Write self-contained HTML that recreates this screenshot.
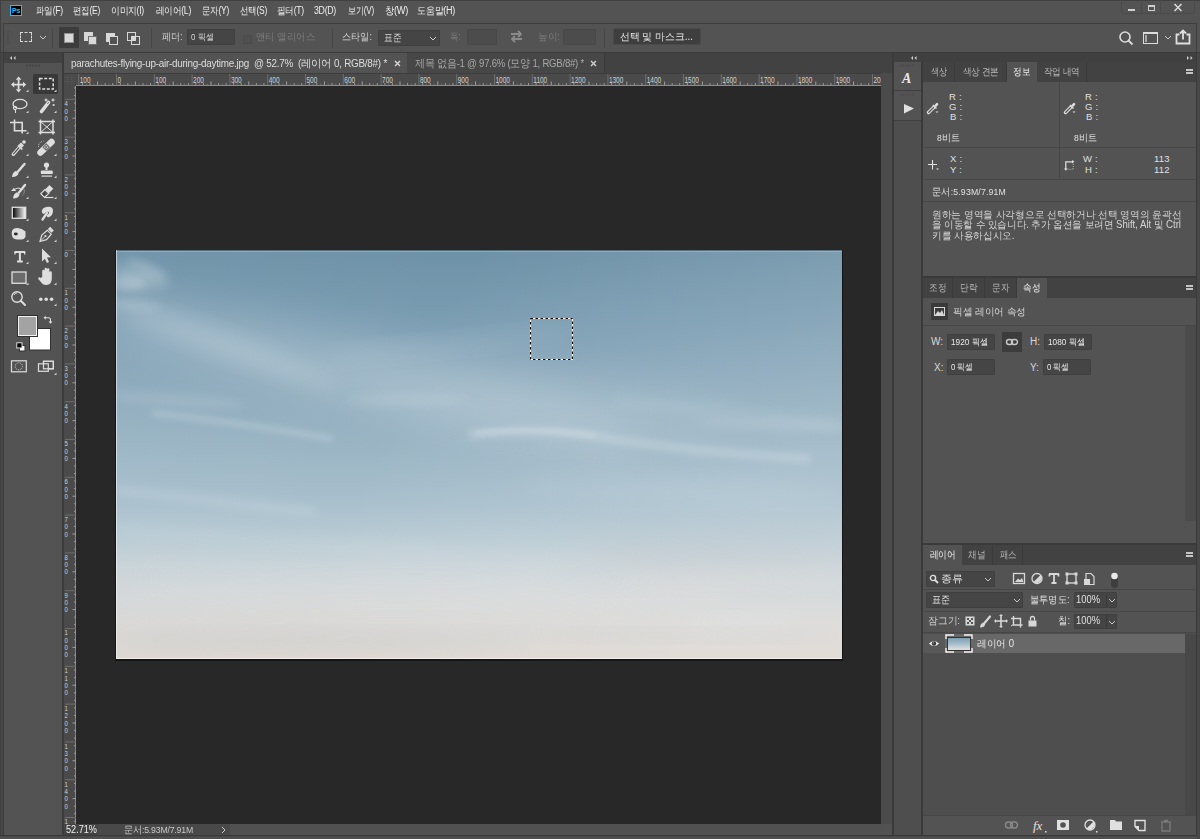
<!DOCTYPE html>
<html><head><meta charset="utf-8">
<style>
*{margin:0;padding:0;box-sizing:border-box}
html,body{width:1200px;height:839px;overflow:hidden;background:#535353;font-family:"Liberation Sans",sans-serif;color:#d6d6d6;font-size:10px}
.a{position:absolute}
.t{position:absolute;white-space:nowrap;line-height:1}
.menu .t{top:6px;color:#eeeeee;font-size:10px;letter-spacing:-0.3px}
svg text{font-family:"Liberation Sans",sans-serif;font-size:7px;fill:#d0d0d0}
.tabs{display:flex;height:20px}
.tab{height:20px;line-height:20px;text-align:center;font-size:10px;color:#b8b8b8;background:#424242;border-right:1px solid #3a3a3a;white-space:nowrap;letter-spacing:-0.2px}
.tab.on{background:#535353;color:#f0f0f0;border-right:none}
.info .t{font-size:9.5px;color:#e0e0e0;letter-spacing:0.2px}
.props .t{font-size:10px;color:#d8d8d8}
.fldt .t{font-size:9px;color:#e8e8e8}
.fl{font-size:10px;color:#e0e0e0}
.fitc{display:inline-block;white-space:nowrap}
.rl{font-size:8.3px}
.rv{font-size:7px}
.fld{background:#454545;border:1px solid #3f3f3f;border-radius:1px}
</style></head><body>
<!-- window border -->
<div class="a" style="left:0;top:0;width:1200px;height:839px;background:#535353"></div>

<!-- MENU BAR -->
<div class="a" style="left:0;top:0;width:1200px;height:1px;background:#404040"></div>
<div class="a" style="left:0;top:0;width:1px;height:839px;background:#404040"></div>
<div class="a" style="left:10px;top:5px;width:12px;height:11px;background:#000;border:1px solid #21c0f0"></div>
<svg class="a" style="left:10px;top:5px" width="12" height="11"><text x="6" y="8.3" text-anchor="middle" style="font-size:7px;font-weight:bold;fill:#21c0f0;letter-spacing:-0.3px">Ps</text></svg>
<div class="menu">
<span class="fit t" style="--w:27px;left:36px">파일(F)</span>
<span class="fit t" style="--w:27px;left:73px">편집(E)</span>
<span class="fit t" style="--w:33px;left:111px">이미지(I)</span>
<span class="fit t" style="--w:35px;left:156px">레이어(L)</span>
<span class="fit t" style="--w:27px;left:202px">문자(Y)</span>
<span class="fit t" style="--w:27px;left:240px">선택(S)</span>
<span class="fit t" style="--w:27px;left:277px">필터(T)</span>
<span class="fit t" style="--w:22px;left:314px">3D(D)</span>
<span class="fit t" style="--w:26px;left:348px">보기(V)</span>
<span class="fit t" style="--w:23px;left:385px">창(W)</span>
<span class="fit t" style="--w:38px;left:417px">도움말(H)</span>
</div>
<!-- window controls -->
<div class="a" style="left:1121px;top:-2px;width:74px;height:16px;border:1px solid #4a4a4a;border-radius:3px"></div>
<div class="a" style="left:1141px;top:0;width:1px;height:13px;background:#4a4a4a"></div>
<div class="a" style="left:1160px;top:0;width:1px;height:13px;background:#4a4a4a"></div>
<div class="a" style="left:1128px;top:9px;width:7px;height:2px;background:#d0d0d0"></div>
<div class="a" style="left:1148px;top:5px;width:7px;height:6px;border:1px solid #d0d0d0;border-top-width:2px"></div>
<svg class="a" style="left:1173px;top:3px" width="10" height="9"><path d="M1.5 1 L8.5 8 M8.5 1 L1.5 8" stroke="#d8d8d8" stroke-width="1.6"/></svg>

<!-- OPTIONS BAR -->
<div class="a" style="left:3px;top:23px;width:1194px;height:1px;background:#3e3e3e"></div>
<div class="a" style="left:3px;top:23px;width:1px;height:29px;background:#3e3e3e"></div>
<div class="a" style="left:1196px;top:23px;width:1px;height:29px;background:#3e3e3e"></div>
<div class="a" style="left:0;top:52px;width:1200px;height:1px;background:#3b3b3b"></div>
<div class="a" style="left:7px;top:31px;width:2px;height:14px;background:repeating-linear-gradient(#4a4a4a 0 1px,transparent 1px 2px)"></div>
<div class="a" style="left:20px;top:32px;width:12px;height:10px;border:1px dashed #d8d8d8"></div>
<svg class="a" style="left:39px;top:35px" width="8" height="5"><path d="M1 1 L4 4 L7 1" stroke="#c8c8c8" fill="none" stroke-width="1"/></svg>
<div class="a" style="left:52px;top:28px;width:1px;height:20px;background:#474747"></div>
<div class="a" style="left:59px;top:27px;width:20px;height:21px;background:#3c3c3c;border-radius:1px"></div>
<div class="a" style="left:64px;top:33px;width:10px;height:10px;background:#d8d8d8;border:1px solid #909090"></div>
<div class="a" style="left:84px;top:32px;width:9px;height:9px;background:#d8d8d8"></div>
<div class="a" style="left:88px;top:36px;width:9px;height:9px;background:#d8d8d8;border:1px solid #707070"></div>
<div class="a" style="left:106px;top:33px;width:9px;height:9px;background:#d8d8d8"></div>
<div class="a" style="left:109px;top:36px;width:9px;height:9px;background:#535353;border:1px solid #d8d8d8"></div>
<div class="a" style="left:127px;top:32px;width:9px;height:9px;border:1px solid #d8d8d8"></div>
<div class="a" style="left:131px;top:36px;width:9px;height:9px;border:1px solid #d8d8d8"></div>
<div class="a" style="left:131px;top:36px;width:5px;height:5px;background:#d8d8d8"></div>
<div class="a" style="left:151px;top:28px;width:1px;height:20px;background:#474747"></div>
<span class="fit t" style="--w:20.5px;left:162px;top:32px">페더:</span>
<div class="a fld" style="left:187px;top:29px;width:48px;height:16px"></div>
<span class="fit t" style="--w:22.5px;left:191px;top:32.5px;font-size:9px">0 픽셀</span>
<div class="a" style="left:243px;top:35px;width:9px;height:9px;border:1px solid #4a4a4a;background:#505050"></div>
<span class="fit t" style="--w:59px;left:256px;top:32px;color:#7c7c7c">앤티 앨리어스</span>
<div class="a" style="left:332px;top:28px;width:1px;height:20px;background:#474747"></div>
<span class="fit t" style="--w:30px;left:342px;top:32px">스타일:</span>
<div class="a fld" style="left:378px;top:30px;width:62px;height:16px"></div>
<span class="fit t" style="--w:17.5px;left:384px;top:33px">표준</span>
<svg class="a" style="left:429px;top:36px" width="8" height="5"><path d="M1 1 L4 4 L7 1" stroke="#c8c8c8" fill="none" stroke-width="1"/></svg>
<span class="fit t" style="--w:11px;left:450px;top:32px;color:#7c7c7c">폭:</span>
<div class="a" style="left:467px;top:29px;width:30px;height:16px;background:#4c4c4c;border:1px solid #484848"></div>
<svg class="a" style="left:509px;top:30px" width="15" height="13"><path d="M2 4 H12 M9 1 L12 4 L9 7 M13 9 H3 M6 6 L3 9 L6 12" stroke="#8a8a8a" fill="none" stroke-width="1.8"/></svg>
<span class="fit t" style="--w:22px;left:538px;top:32px;color:#7c7c7c">높이:</span>
<div class="a" style="left:563px;top:29px;width:33px;height:16px;background:#4c4c4c;border:1px solid #484848"></div>
<div class="a" style="left:604px;top:28px;width:1px;height:20px;background:#474747"></div>
<div class="a" style="left:613px;top:28px;width:88px;height:17px;background:#3e3e3e;border:1px solid #4a4a4a;border-radius:2px"></div>
<span class="fit t" style="--w:73px;left:620px;top:32px;color:#e8e8e8">선택 및 마스크...</span>
<svg class="a" style="left:1118px;top:30px" width="16" height="16"><circle cx="7" cy="7" r="5" stroke="#dcdcdc" stroke-width="1.6" fill="none"/><path d="M10.5 10.5 L14.5 14.5" stroke="#dcdcdc" stroke-width="1.8"/></svg>
<div class="a" style="left:1143px;top:32px;width:15px;height:12px;border:1px solid #dcdcdc;border-top-width:2px"></div>
<div class="a" style="left:1145px;top:35px;width:2px;height:7px;background:#aaa"></div>
<svg class="a" style="left:1164px;top:35px" width="8" height="5"><path d="M1 1 L4 4 L7 1" stroke="#c8c8c8" fill="none" stroke-width="1"/></svg>
<svg class="a" style="left:1175px;top:29px" width="16" height="16"><path d="M4.5 5.5 H1.5 V14.5 H14.5 V5.5 H11.5" stroke="#e0e0e0" stroke-width="1.8" fill="none"/><path d="M8 10.5 V2 M5 4.5 L8 1.5 L11 4.5" stroke="#e0e0e0" stroke-width="1.8" fill="none"/></svg>

<!-- LEFT TOOLS PANEL -->
<div class="a" style="left:1px;top:53px;width:3px;height:782px;background:#474747"></div>
<div class="a" style="left:3px;top:53px;width:1px;height:782px;background:#3b3b3b"></div>
<div class="a" style="left:4px;top:53px;width:58px;height:10px;background:#424242"></div>
<svg class="a" style="left:9px;top:55px" width="8" height="6"><path d="M3 1 L1 3 L3 5z M6.5 1 L4.5 3 L6.5 5z" fill="#d0d0d0"/></svg>
<div class="a" style="left:4px;top:63px;width:58px;height:772px;background:#535353"></div>
<div class="a" style="left:62px;top:53px;width:2px;height:782px;background:#3b3b3b"></div>
<svg class="a" style="left:0;top:0" width="64" height="380"><path d="M26 65.5 H40" stroke="#474747" stroke-width="2" stroke-dasharray="2 1"/><rect x="33" y="74" width="25" height="20" rx="1.5" fill="#383838"/><g fill="#dedede"><path d="M17.7 79.5 h1.8 v10 h-1.8z M13 83.7 h11 v1.8 h-11z"/><path d="M18.6 76.5 l-2.8 3.2 h5.6z M18.6 92.5 l-2.8 -3.2 h5.6z M11 84.6 l3.2 -2.8 v5.6z M26.2 84.6 l-3.2 -2.8 v5.6z"/></g><path d="M28.5 92 h-2.5 l2.5 -2.5z" fill="#cfcfcf"/><rect x="39.6" y="78.4" width="13.6" height="10.6" fill="none" stroke="#dedede" stroke-width="1.5" stroke-dasharray="3 1.6"/><path d="M56.5 92 h-2.5 l2.5 -2.5z" fill="#cfcfcf"/><ellipse cx="20" cy="104" rx="7" ry="4.6" fill="none" stroke="#dedede" stroke-width="1.3"/><circle cx="15" cy="108" r="1.6" fill="none" stroke="#dedede" stroke-width="1.1"/><path d="M15.5 109.5 V113" stroke="#dedede" stroke-width="1.1"/><path d="M28.5 113 h-2.5 l2.5 -2.5z" fill="#cfcfcf"/><path d="M41.5 111.5 L48.5 102.5" stroke="#dedede" stroke-width="3.6" stroke-linecap="round"/><path d="M47.5 103.8 L48.6 102.4" stroke="#535353" stroke-width="1"/><path d="M46 98 l0.8 1.6 1.6 0.4 -1.6 0.5 -0.8 1.6 -0.8 -1.6 -1.6 -0.5 1.6 -0.4z M53 98 l0.8 1.6 1.6 0.4 -1.6 0.5 -0.8 1.6 -0.8 -1.6 -1.6 -0.5 1.6 -0.4z" fill="#dedede"/><circle cx="53.6" cy="105" r="1.1" fill="#dedede"/><path d="M56.5 113 h-2.5 l2.5 -2.5z" fill="#cfcfcf"/><path d="M10 122.5 H22.2 V133.5 M14.5 119.5 V130.8 H26.5" fill="none" stroke="#dedede" stroke-width="1.6"/><path d="M28.5 134 h-2.5 l2.5 -2.5z" fill="#cfcfcf"/><path d="M38.5 121.5 H55 M38.5 132.5 H55 M40.5 119.5 V134.5 M53 119.5 V134.5" stroke="#dedede" stroke-width="1.5"/><path d="M40.5 121.5 L53 132.5 M53 121.5 L40.5 132.5" stroke="#dedede" stroke-width="1"/><path d="M13.3 154.3 L20.5 146" stroke="#dedede" stroke-width="3.4" stroke-linecap="round"/><path d="M13.6 153.8 L20 146.5" stroke="#535353" stroke-width="1.2" stroke-linecap="round"/><path d="M18.5 144.5 l4.5 4.5 l-1.5 1 l-4 -4z" fill="#dedede"/><path d="M21 142.5 l3 3 l-2 2 l-3 -3z" fill="#dedede"/><circle cx="24" cy="142" r="1.8" fill="#dedede"/><path d="M28.5 156 h-2.5 l2.5 -2.5z" fill="#cfcfcf"/><path d="M40.5 152.5 L51.5 142" stroke="#dedede" stroke-width="6.5" stroke-linecap="round"/><rect x="43.5" y="144.5" width="5.5" height="5.5" transform="rotate(-45 46.2 147.2)" fill="#6a6a6a"/><circle cx="46.2" cy="145.8" r="0.7" fill="#dedede"/><circle cx="46.2" cy="148.6" r="0.7" fill="#dedede"/><circle cx="44.8" cy="147.2" r="0.7" fill="#dedede"/><circle cx="47.6" cy="147.2" r="0.7" fill="#dedede"/><path d="M38.5 147 q0 -5 5 -6" fill="none" stroke="#dedede" stroke-width="0.9" stroke-dasharray="1 1"/><path d="M56.5 156 h-2.5 l2.5 -2.5z" fill="#cfcfcf"/><path d="M18 171.5 L24.5 164" stroke="#dedede" stroke-width="2.4" stroke-linecap="round"/><path d="M12 177 q0.5 -5 4 -6.3 l2.6 2.2 q-1 4.2 -6.6 4.1z" fill="#dedede"/><path d="M28.5 178 h-2.5 l2.5 -2.5z" fill="#cfcfcf"/><circle cx="46.5" cy="165" r="2.6" fill="#dedede"/><rect x="45.5" y="166" width="2" height="4" fill="#dedede"/><rect x="40.8" y="170.5" width="12" height="3.6" rx="1.2" fill="#dedede"/><rect x="41.5" y="175.5" width="10.5" height="1.2" fill="#dedede"/><path d="M56.5 178 h-2.5 l2.5 -2.5z" fill="#cfcfcf"/><path d="M19 192.5 L25 185" stroke="#dedede" stroke-width="2.4" stroke-linecap="round"/><path d="M13 198.5 q0.5 -5 4 -6.3 l2.6 2.2 q-1 4.2 -6.6 4.1z" fill="#dedede"/><path d="M11 191 l3 -3.3 l2 3.3z" fill="#dedede"/><path d="M14.5 189.3 q4 -2.3 6.5 -0.5" fill="none" stroke="#dedede" stroke-width="1"/><path d="M24 189.5 q1 3 -1.5 6" fill="none" stroke="#dedede" stroke-width="0.8" stroke-dasharray="1 1"/><path d="M28.5 199 h-2.5 l2.5 -2.5z" fill="#cfcfcf"/><path d="M45 189.5 L49.5 185 L53.3 188.8 L48.8 193.3z" fill="#dedede"/><path d="M45 189.5 L40.8 193.7 L44.6 197.5 L48.8 193.3z" fill="none" stroke="#dedede" stroke-width="1.2"/><path d="M44.6 197.5 H53.5" stroke="#dedede" stroke-width="1.2"/><circle cx="44" cy="194" r="1.2" fill="#3a3a3a"/><path d="M56.5 199 h-2.5 l2.5 -2.5z" fill="#cfcfcf"/><defs><linearGradient id="g1"><stop offset="0" stop-color="#000"/><stop offset="1" stop-color="#fff"/></linearGradient></defs><rect x="12.3" y="207.3" width="13.4" height="11" fill="url(#g1)" stroke="#dedede" stroke-width="1.3"/><path d="M28.5 221 h-2.5 l2.5 -2.5z" fill="#cfcfcf"/><path d="M42.5 219.5 L47 213" stroke="#dedede" stroke-width="2.2" stroke-linecap="round"/><path d="M42 213 q-1 -5 4.5 -6 q6.5 -1 6.5 4 q0 5 -5 6.5 l-2 -2 q3 -1 3 -3.5 q-2.5 -1 -5 2z" fill="#dedede"/><path d="M56.5 221 h-2.5 l2.5 -2.5z" fill="#cfcfcf"/><path d="M11.7 233 q0 -5 6 -5 q4 0 7.8 3.5 v5.5 q-1.5 2.5 -4 2.5 h-4.5 q-5.3 0 -5.3 -6.5z" fill="#dedede"/><ellipse cx="15.8" cy="234" rx="2" ry="1.4" fill="#2e2e2e"/><path d="M28.5 242 h-2.5 l2.5 -2.5z" fill="#cfcfcf"/><path d="M40 241.5 l1.8 -6.5 l5.5 -4.8 l4 4 l-4.8 5.5z" fill="none" stroke="#dedede" stroke-width="1.2"/><path d="M47.8 229 l2.4 -2.2 l3.6 3.6 l-2.2 2.4z" fill="#dedede"/><path d="M40.5 241 L45 236.5" stroke="#dedede" stroke-width="0.9"/><circle cx="45.5" cy="236" r="1.1" fill="#dedede"/><path d="M56.5 242 h-2.5 l2.5 -2.5z" fill="#cfcfcf"/><path d="M14.5 252 H25.2 M19.9 252 V261.5 M17 261.5 H22.8" stroke="#dedede" stroke-width="2" fill="none"/><path d="M15 252 v2.5 M24.7 252 v2.5" stroke="#dedede" stroke-width="1.3"/><path d="M28.5 264 h-2.5 l2.5 -2.5z" fill="#cfcfcf"/><path d="M42 248.5 V261.5 L44.8 258.7 L47 263 L49 262 L47 257.5 L51 257.3z" fill="#dedede"/><path d="M56.5 264 h-2.5 l2.5 -2.5z" fill="#cfcfcf"/><rect x="12" y="272" width="14" height="11.3" fill="#6c6c6c" stroke="#dedede" stroke-width="1.3"/><path d="M28.5 285 h-2.5 l2.5 -2.5z" fill="#cfcfcf"/><path d="M42.2 277 v-6 q0 -1.2 1.2 -1.2 q1.2 0 1.2 1.2 v4.5 v-6.5 q0 -1.2 1.2 -1.2 q1.2 0 1.2 1.2 v6 v-5.5 q0 -1.2 1.2 -1.2 q1.2 0 1.2 1.2 v6.5 v-3.5 q0 -1.2 1.2 -1.2 q1.2 0 1.2 1.2 v6 q0 6 -5.5 6.5 q-3.5 0 -5 -2.5 l-3 -3.5 q-0.5 -1 0.5 -1.5 q1 -0.5 1.8 0.5z" fill="#dedede"/><path d="M56.5 285 h-2.5 l2.5 -2.5z" fill="#cfcfcf"/><circle cx="17" cy="297" r="5.2" fill="none" stroke="#dedede" stroke-width="1.4"/><path d="M14 295 q1 -2 3 -2" fill="none" stroke="#dedede" stroke-width="0.9"/><path d="M20.8 300.8 L25 305" stroke="#dedede" stroke-width="2" stroke-linecap="round"/><circle cx="40.8" cy="299.2" r="1.8" fill="#dedede"/><circle cx="46.2" cy="299.2" r="1.8" fill="#dedede"/><circle cx="51.6" cy="299.2" r="1.8" fill="#dedede"/><path d="M56.5 306 h-2.5 l2.5 -2.5z" fill="#cfcfcf"/><rect x="29.5" y="328.5" width="21" height="21.5" fill="#fff" stroke="#303030"/><rect x="17.5" y="315.5" width="20" height="21" fill="#f2f2f2" stroke="#303030"/><rect x="19" y="317" width="17" height="18" fill="#a3a3a3"/><path d="M45 317.8 h3.5 q2 0 2 2 v2.5" fill="none" stroke="#dedede" stroke-width="1.1"/><path d="M43.5 317.8 l2.2 -2 v4z M50.5 323.8 l-2 -2.2 h4z" fill="#dedede"/><rect x="19.5" y="345.5" width="5.5" height="5.5" fill="#fff" stroke="#303030"/><rect x="16.8" y="342.8" width="5.2" height="5.2" fill="#000" stroke="#f0f0f0" stroke-width="0.9"/><rect x="11.5" y="360.8" width="14.8" height="11" fill="none" stroke="#dedede" stroke-width="1.2"/><circle cx="18.8" cy="366.3" r="3.6" fill="none" stroke="#dedede" stroke-width="0.9" stroke-dasharray="0.9 0.9"/><rect x="43.5" y="361.3" width="9.8" height="7.5" fill="#535353" stroke="#dedede" stroke-width="1.2"/><rect x="38.5" y="363.8" width="9.8" height="7.5" fill="#535353" stroke="#dedede" stroke-width="1.2"/><rect x="43.5" y="361.3" width="9.8" height="7.5" fill="none" stroke="#dedede" stroke-width="1.2"/><path d="M56.5 375 h-2.5 l2.5 -2.5z" fill="#cfcfcf"/></svg>

<!-- DOC AREA -->
<div class="a" style="left:64px;top:53px;width:829px;height:20px;background:#424242"></div>
<div class="a" style="left:64px;top:53px;width:343px;height:20px;background:#535353"></div>
<div class="a" style="left:407px;top:53px;width:197px;height:20px;background:#474747"></div>
<div class="a" style="left:604px;top:53px;width:1px;height:20px;background:#3a3a3a"></div>
<div class="fit t" style="--w:316px;left:71px;top:58px;font-size:10.5px;color:#dedede;letter-spacing:-0.25px">parachutes-flying-up-air-during-daytime.jpg&nbsp; @ 52.7%&nbsp; (레이어 0, RGB/8#) *</div>
<svg class="a" style="left:394px;top:60px" width="7" height="7"><path d="M1 1 L6 6 M6 1 L1 6" stroke="#d8d8d8" stroke-width="1.4"/></svg>
<div class="fit t" style="--w:169px;left:415px;top:58px;font-size:10.5px;color:#a8a8a8;letter-spacing:-0.25px">제목 없음-1 @ 97.6% (모양 1, RGB/8#) *</div>
<svg class="a" style="left:590px;top:60px" width="7" height="7"><path d="M1 1 L6 6 M6 1 L1 6" stroke="#d0d0d0" stroke-width="1.4"/></svg>
<div class="a" style="left:64px;top:73px;width:12px;height:13px;background:#4a4a4a"></div>
<svg class="a" style="left:64px;top:73px" width="817" height="13"><rect width="817" height="13" fill="#4a4a4a"/><rect x="0" y="12" width="817" height="1" fill="#8c8c8c"/><rect x="17.98" y="10" width="1" height="2" fill="#9a9a9a"/><rect x="21.76" y="10.5" width="1" height="1.5" fill="#6e6e6e"/><rect x="25.54" y="10" width="1" height="2" fill="#9a9a9a"/><rect x="29.32" y="10.5" width="1" height="1.5" fill="#6e6e6e"/><rect x="33.10" y="8.5" width="1" height="3.5" fill="#a0a0a0"/><rect x="36.88" y="10.5" width="1" height="1.5" fill="#6e6e6e"/><rect x="40.66" y="10" width="1" height="2" fill="#9a9a9a"/><rect x="44.44" y="10.5" width="1" height="1.5" fill="#6e6e6e"/><rect x="48.22" y="10" width="1" height="2" fill="#9a9a9a"/><rect x="55.78" y="10" width="1" height="2" fill="#9a9a9a"/><rect x="59.56" y="10.5" width="1" height="1.5" fill="#6e6e6e"/><rect x="63.34" y="10" width="1" height="2" fill="#9a9a9a"/><rect x="67.12" y="10.5" width="1" height="1.5" fill="#6e6e6e"/><rect x="70.90" y="8.5" width="1" height="3.5" fill="#a0a0a0"/><rect x="74.68" y="10.5" width="1" height="1.5" fill="#6e6e6e"/><rect x="78.46" y="10" width="1" height="2" fill="#9a9a9a"/><rect x="82.24" y="10.5" width="1" height="1.5" fill="#6e6e6e"/><rect x="86.02" y="10" width="1" height="2" fill="#9a9a9a"/><rect x="93.58" y="10" width="1" height="2" fill="#9a9a9a"/><rect x="97.36" y="10.5" width="1" height="1.5" fill="#6e6e6e"/><rect x="101.14" y="10" width="1" height="2" fill="#9a9a9a"/><rect x="104.92" y="10.5" width="1" height="1.5" fill="#6e6e6e"/><rect x="108.70" y="8.5" width="1" height="3.5" fill="#a0a0a0"/><rect x="112.48" y="10.5" width="1" height="1.5" fill="#6e6e6e"/><rect x="116.26" y="10" width="1" height="2" fill="#9a9a9a"/><rect x="120.04" y="10.5" width="1" height="1.5" fill="#6e6e6e"/><rect x="123.82" y="10" width="1" height="2" fill="#9a9a9a"/><rect x="131.38" y="10" width="1" height="2" fill="#9a9a9a"/><rect x="135.16" y="10.5" width="1" height="1.5" fill="#6e6e6e"/><rect x="138.94" y="10" width="1" height="2" fill="#9a9a9a"/><rect x="142.72" y="10.5" width="1" height="1.5" fill="#6e6e6e"/><rect x="146.50" y="8.5" width="1" height="3.5" fill="#a0a0a0"/><rect x="150.28" y="10.5" width="1" height="1.5" fill="#6e6e6e"/><rect x="154.06" y="10" width="1" height="2" fill="#9a9a9a"/><rect x="157.84" y="10.5" width="1" height="1.5" fill="#6e6e6e"/><rect x="161.62" y="10" width="1" height="2" fill="#9a9a9a"/><rect x="169.18" y="10" width="1" height="2" fill="#9a9a9a"/><rect x="172.96" y="10.5" width="1" height="1.5" fill="#6e6e6e"/><rect x="176.74" y="10" width="1" height="2" fill="#9a9a9a"/><rect x="180.52" y="10.5" width="1" height="1.5" fill="#6e6e6e"/><rect x="184.30" y="8.5" width="1" height="3.5" fill="#a0a0a0"/><rect x="188.08" y="10.5" width="1" height="1.5" fill="#6e6e6e"/><rect x="191.86" y="10" width="1" height="2" fill="#9a9a9a"/><rect x="195.64" y="10.5" width="1" height="1.5" fill="#6e6e6e"/><rect x="199.42" y="10" width="1" height="2" fill="#9a9a9a"/><rect x="206.98" y="10" width="1" height="2" fill="#9a9a9a"/><rect x="210.76" y="10.5" width="1" height="1.5" fill="#6e6e6e"/><rect x="214.54" y="10" width="1" height="2" fill="#9a9a9a"/><rect x="218.32" y="10.5" width="1" height="1.5" fill="#6e6e6e"/><rect x="222.10" y="8.5" width="1" height="3.5" fill="#a0a0a0"/><rect x="225.88" y="10.5" width="1" height="1.5" fill="#6e6e6e"/><rect x="229.66" y="10" width="1" height="2" fill="#9a9a9a"/><rect x="233.44" y="10.5" width="1" height="1.5" fill="#6e6e6e"/><rect x="237.22" y="10" width="1" height="2" fill="#9a9a9a"/><rect x="244.78" y="10" width="1" height="2" fill="#9a9a9a"/><rect x="248.56" y="10.5" width="1" height="1.5" fill="#6e6e6e"/><rect x="252.34" y="10" width="1" height="2" fill="#9a9a9a"/><rect x="256.12" y="10.5" width="1" height="1.5" fill="#6e6e6e"/><rect x="259.90" y="8.5" width="1" height="3.5" fill="#a0a0a0"/><rect x="263.68" y="10.5" width="1" height="1.5" fill="#6e6e6e"/><rect x="267.46" y="10" width="1" height="2" fill="#9a9a9a"/><rect x="271.24" y="10.5" width="1" height="1.5" fill="#6e6e6e"/><rect x="275.02" y="10" width="1" height="2" fill="#9a9a9a"/><rect x="282.58" y="10" width="1" height="2" fill="#9a9a9a"/><rect x="286.36" y="10.5" width="1" height="1.5" fill="#6e6e6e"/><rect x="290.14" y="10" width="1" height="2" fill="#9a9a9a"/><rect x="293.92" y="10.5" width="1" height="1.5" fill="#6e6e6e"/><rect x="297.70" y="8.5" width="1" height="3.5" fill="#a0a0a0"/><rect x="301.48" y="10.5" width="1" height="1.5" fill="#6e6e6e"/><rect x="305.26" y="10" width="1" height="2" fill="#9a9a9a"/><rect x="309.04" y="10.5" width="1" height="1.5" fill="#6e6e6e"/><rect x="312.82" y="10" width="1" height="2" fill="#9a9a9a"/><rect x="320.38" y="10" width="1" height="2" fill="#9a9a9a"/><rect x="324.16" y="10.5" width="1" height="1.5" fill="#6e6e6e"/><rect x="327.94" y="10" width="1" height="2" fill="#9a9a9a"/><rect x="331.72" y="10.5" width="1" height="1.5" fill="#6e6e6e"/><rect x="335.50" y="8.5" width="1" height="3.5" fill="#a0a0a0"/><rect x="339.28" y="10.5" width="1" height="1.5" fill="#6e6e6e"/><rect x="343.06" y="10" width="1" height="2" fill="#9a9a9a"/><rect x="346.84" y="10.5" width="1" height="1.5" fill="#6e6e6e"/><rect x="350.62" y="10" width="1" height="2" fill="#9a9a9a"/><rect x="358.18" y="10" width="1" height="2" fill="#9a9a9a"/><rect x="361.96" y="10.5" width="1" height="1.5" fill="#6e6e6e"/><rect x="365.74" y="10" width="1" height="2" fill="#9a9a9a"/><rect x="369.52" y="10.5" width="1" height="1.5" fill="#6e6e6e"/><rect x="373.30" y="8.5" width="1" height="3.5" fill="#a0a0a0"/><rect x="377.08" y="10.5" width="1" height="1.5" fill="#6e6e6e"/><rect x="380.86" y="10" width="1" height="2" fill="#9a9a9a"/><rect x="384.64" y="10.5" width="1" height="1.5" fill="#6e6e6e"/><rect x="388.42" y="10" width="1" height="2" fill="#9a9a9a"/><rect x="395.98" y="10" width="1" height="2" fill="#9a9a9a"/><rect x="399.76" y="10.5" width="1" height="1.5" fill="#6e6e6e"/><rect x="403.54" y="10" width="1" height="2" fill="#9a9a9a"/><rect x="407.32" y="10.5" width="1" height="1.5" fill="#6e6e6e"/><rect x="411.10" y="8.5" width="1" height="3.5" fill="#a0a0a0"/><rect x="414.88" y="10.5" width="1" height="1.5" fill="#6e6e6e"/><rect x="418.66" y="10" width="1" height="2" fill="#9a9a9a"/><rect x="422.44" y="10.5" width="1" height="1.5" fill="#6e6e6e"/><rect x="426.22" y="10" width="1" height="2" fill="#9a9a9a"/><rect x="433.78" y="10" width="1" height="2" fill="#9a9a9a"/><rect x="437.56" y="10.5" width="1" height="1.5" fill="#6e6e6e"/><rect x="441.34" y="10" width="1" height="2" fill="#9a9a9a"/><rect x="445.12" y="10.5" width="1" height="1.5" fill="#6e6e6e"/><rect x="448.90" y="8.5" width="1" height="3.5" fill="#a0a0a0"/><rect x="452.68" y="10.5" width="1" height="1.5" fill="#6e6e6e"/><rect x="456.46" y="10" width="1" height="2" fill="#9a9a9a"/><rect x="460.24" y="10.5" width="1" height="1.5" fill="#6e6e6e"/><rect x="464.02" y="10" width="1" height="2" fill="#9a9a9a"/><rect x="471.58" y="10" width="1" height="2" fill="#9a9a9a"/><rect x="475.36" y="10.5" width="1" height="1.5" fill="#6e6e6e"/><rect x="479.14" y="10" width="1" height="2" fill="#9a9a9a"/><rect x="482.92" y="10.5" width="1" height="1.5" fill="#6e6e6e"/><rect x="486.70" y="8.5" width="1" height="3.5" fill="#a0a0a0"/><rect x="490.48" y="10.5" width="1" height="1.5" fill="#6e6e6e"/><rect x="494.26" y="10" width="1" height="2" fill="#9a9a9a"/><rect x="498.04" y="10.5" width="1" height="1.5" fill="#6e6e6e"/><rect x="501.82" y="10" width="1" height="2" fill="#9a9a9a"/><rect x="509.38" y="10" width="1" height="2" fill="#9a9a9a"/><rect x="513.16" y="10.5" width="1" height="1.5" fill="#6e6e6e"/><rect x="516.94" y="10" width="1" height="2" fill="#9a9a9a"/><rect x="520.72" y="10.5" width="1" height="1.5" fill="#6e6e6e"/><rect x="524.50" y="8.5" width="1" height="3.5" fill="#a0a0a0"/><rect x="528.28" y="10.5" width="1" height="1.5" fill="#6e6e6e"/><rect x="532.06" y="10" width="1" height="2" fill="#9a9a9a"/><rect x="535.84" y="10.5" width="1" height="1.5" fill="#6e6e6e"/><rect x="539.62" y="10" width="1" height="2" fill="#9a9a9a"/><rect x="547.18" y="10" width="1" height="2" fill="#9a9a9a"/><rect x="550.96" y="10.5" width="1" height="1.5" fill="#6e6e6e"/><rect x="554.74" y="10" width="1" height="2" fill="#9a9a9a"/><rect x="558.52" y="10.5" width="1" height="1.5" fill="#6e6e6e"/><rect x="562.30" y="8.5" width="1" height="3.5" fill="#a0a0a0"/><rect x="566.08" y="10.5" width="1" height="1.5" fill="#6e6e6e"/><rect x="569.86" y="10" width="1" height="2" fill="#9a9a9a"/><rect x="573.64" y="10.5" width="1" height="1.5" fill="#6e6e6e"/><rect x="577.42" y="10" width="1" height="2" fill="#9a9a9a"/><rect x="584.98" y="10" width="1" height="2" fill="#9a9a9a"/><rect x="588.76" y="10.5" width="1" height="1.5" fill="#6e6e6e"/><rect x="592.54" y="10" width="1" height="2" fill="#9a9a9a"/><rect x="596.32" y="10.5" width="1" height="1.5" fill="#6e6e6e"/><rect x="600.10" y="8.5" width="1" height="3.5" fill="#a0a0a0"/><rect x="603.88" y="10.5" width="1" height="1.5" fill="#6e6e6e"/><rect x="607.66" y="10" width="1" height="2" fill="#9a9a9a"/><rect x="611.44" y="10.5" width="1" height="1.5" fill="#6e6e6e"/><rect x="615.22" y="10" width="1" height="2" fill="#9a9a9a"/><rect x="622.78" y="10" width="1" height="2" fill="#9a9a9a"/><rect x="626.56" y="10.5" width="1" height="1.5" fill="#6e6e6e"/><rect x="630.34" y="10" width="1" height="2" fill="#9a9a9a"/><rect x="634.12" y="10.5" width="1" height="1.5" fill="#6e6e6e"/><rect x="637.90" y="8.5" width="1" height="3.5" fill="#a0a0a0"/><rect x="641.68" y="10.5" width="1" height="1.5" fill="#6e6e6e"/><rect x="645.46" y="10" width="1" height="2" fill="#9a9a9a"/><rect x="649.24" y="10.5" width="1" height="1.5" fill="#6e6e6e"/><rect x="653.02" y="10" width="1" height="2" fill="#9a9a9a"/><rect x="660.58" y="10" width="1" height="2" fill="#9a9a9a"/><rect x="664.36" y="10.5" width="1" height="1.5" fill="#6e6e6e"/><rect x="668.14" y="10" width="1" height="2" fill="#9a9a9a"/><rect x="671.92" y="10.5" width="1" height="1.5" fill="#6e6e6e"/><rect x="675.70" y="8.5" width="1" height="3.5" fill="#a0a0a0"/><rect x="679.48" y="10.5" width="1" height="1.5" fill="#6e6e6e"/><rect x="683.26" y="10" width="1" height="2" fill="#9a9a9a"/><rect x="687.04" y="10.5" width="1" height="1.5" fill="#6e6e6e"/><rect x="690.82" y="10" width="1" height="2" fill="#9a9a9a"/><rect x="698.38" y="10" width="1" height="2" fill="#9a9a9a"/><rect x="702.16" y="10.5" width="1" height="1.5" fill="#6e6e6e"/><rect x="705.94" y="10" width="1" height="2" fill="#9a9a9a"/><rect x="709.72" y="10.5" width="1" height="1.5" fill="#6e6e6e"/><rect x="713.50" y="8.5" width="1" height="3.5" fill="#a0a0a0"/><rect x="717.28" y="10.5" width="1" height="1.5" fill="#6e6e6e"/><rect x="721.06" y="10" width="1" height="2" fill="#9a9a9a"/><rect x="724.84" y="10.5" width="1" height="1.5" fill="#6e6e6e"/><rect x="728.62" y="10" width="1" height="2" fill="#9a9a9a"/><rect x="736.18" y="10" width="1" height="2" fill="#9a9a9a"/><rect x="739.96" y="10.5" width="1" height="1.5" fill="#6e6e6e"/><rect x="743.74" y="10" width="1" height="2" fill="#9a9a9a"/><rect x="747.52" y="10.5" width="1" height="1.5" fill="#6e6e6e"/><rect x="751.30" y="8.5" width="1" height="3.5" fill="#a0a0a0"/><rect x="755.08" y="10.5" width="1" height="1.5" fill="#6e6e6e"/><rect x="758.86" y="10" width="1" height="2" fill="#9a9a9a"/><rect x="762.64" y="10.5" width="1" height="1.5" fill="#6e6e6e"/><rect x="766.42" y="10" width="1" height="2" fill="#9a9a9a"/><rect x="773.98" y="10" width="1" height="2" fill="#9a9a9a"/><rect x="777.76" y="10.5" width="1" height="1.5" fill="#6e6e6e"/><rect x="781.54" y="10" width="1" height="2" fill="#9a9a9a"/><rect x="785.32" y="10.5" width="1" height="1.5" fill="#6e6e6e"/><rect x="789.10" y="8.5" width="1" height="3.5" fill="#a0a0a0"/><rect x="792.88" y="10.5" width="1" height="1.5" fill="#6e6e6e"/><rect x="796.66" y="10" width="1" height="2" fill="#9a9a9a"/><rect x="800.44" y="10.5" width="1" height="1.5" fill="#6e6e6e"/><rect x="804.22" y="10" width="1" height="2" fill="#9a9a9a"/><rect x="14.20" y="1" width="1" height="11" fill="#6e6e6e"/><text transform="translate(15.70,10) scale(0.78,1)" class="rl">100</text><rect x="52.00" y="1" width="1" height="11" fill="#6e6e6e"/><text transform="translate(53.50,10) scale(0.78,1)" class="rl">0</text><rect x="89.80" y="1" width="1" height="11" fill="#6e6e6e"/><text transform="translate(91.30,10) scale(0.78,1)" class="rl">100</text><rect x="127.60" y="1" width="1" height="11" fill="#6e6e6e"/><text transform="translate(129.10,10) scale(0.78,1)" class="rl">200</text><rect x="165.40" y="1" width="1" height="11" fill="#6e6e6e"/><text transform="translate(166.90,10) scale(0.78,1)" class="rl">300</text><rect x="203.20" y="1" width="1" height="11" fill="#6e6e6e"/><text transform="translate(204.70,10) scale(0.78,1)" class="rl">400</text><rect x="241.00" y="1" width="1" height="11" fill="#6e6e6e"/><text transform="translate(242.50,10) scale(0.78,1)" class="rl">500</text><rect x="278.80" y="1" width="1" height="11" fill="#6e6e6e"/><text transform="translate(280.30,10) scale(0.78,1)" class="rl">600</text><rect x="316.60" y="1" width="1" height="11" fill="#6e6e6e"/><text transform="translate(318.10,10) scale(0.78,1)" class="rl">700</text><rect x="354.40" y="1" width="1" height="11" fill="#6e6e6e"/><text transform="translate(355.90,10) scale(0.78,1)" class="rl">800</text><rect x="392.20" y="1" width="1" height="11" fill="#6e6e6e"/><text transform="translate(393.70,10) scale(0.78,1)" class="rl">900</text><rect x="430.00" y="1" width="1" height="11" fill="#6e6e6e"/><text transform="translate(431.50,10) scale(0.78,1)" class="rl">1000</text><rect x="467.80" y="1" width="1" height="11" fill="#6e6e6e"/><text transform="translate(469.30,10) scale(0.78,1)" class="rl">1100</text><rect x="505.60" y="1" width="1" height="11" fill="#6e6e6e"/><text transform="translate(507.10,10) scale(0.78,1)" class="rl">1200</text><rect x="543.40" y="1" width="1" height="11" fill="#6e6e6e"/><text transform="translate(544.90,10) scale(0.78,1)" class="rl">1300</text><rect x="581.20" y="1" width="1" height="11" fill="#6e6e6e"/><text transform="translate(582.70,10) scale(0.78,1)" class="rl">1400</text><rect x="619.00" y="1" width="1" height="11" fill="#6e6e6e"/><text transform="translate(620.50,10) scale(0.78,1)" class="rl">1500</text><rect x="656.80" y="1" width="1" height="11" fill="#6e6e6e"/><text transform="translate(658.30,10) scale(0.78,1)" class="rl">1600</text><rect x="694.60" y="1" width="1" height="11" fill="#6e6e6e"/><text transform="translate(696.10,10) scale(0.78,1)" class="rl">1700</text><rect x="732.40" y="1" width="1" height="11" fill="#6e6e6e"/><text transform="translate(733.90,10) scale(0.78,1)" class="rl">1800</text><rect x="770.20" y="1" width="1" height="11" fill="#6e6e6e"/><text transform="translate(771.70,10) scale(0.78,1)" class="rl">1900</text><rect x="808.00" y="1" width="1" height="11" fill="#6e6e6e"/><text transform="translate(809.50,10) scale(0.78,1)" class="rl">2000</text></svg><svg class="a" style="left:64px;top:86px" width="12" height="738"><rect width="12" height="738" fill="#4a4a4a"/><rect x="11" y="0" width="1" height="738" fill="#8c8c8c"/><rect x="10" y="1.46" width="2" height="1" fill="#9a9a9a"/><rect x="10.5" y="5.24" width="1.5" height="1" fill="#6e6e6e"/><rect x="10" y="9.02" width="2" height="1" fill="#9a9a9a"/><rect x="10" y="16.58" width="2" height="1" fill="#9a9a9a"/><rect x="10.5" y="20.36" width="1.5" height="1" fill="#6e6e6e"/><rect x="10" y="24.14" width="2" height="1" fill="#9a9a9a"/><rect x="10.5" y="27.92" width="1.5" height="1" fill="#6e6e6e"/><rect x="8.5" y="31.70" width="3.5" height="1" fill="#a0a0a0"/><rect x="10.5" y="35.48" width="1.5" height="1" fill="#6e6e6e"/><rect x="10" y="39.26" width="2" height="1" fill="#9a9a9a"/><rect x="10.5" y="43.04" width="1.5" height="1" fill="#6e6e6e"/><rect x="10" y="46.82" width="2" height="1" fill="#9a9a9a"/><rect x="10" y="54.38" width="2" height="1" fill="#9a9a9a"/><rect x="10.5" y="58.16" width="1.5" height="1" fill="#6e6e6e"/><rect x="10" y="61.94" width="2" height="1" fill="#9a9a9a"/><rect x="10.5" y="65.72" width="1.5" height="1" fill="#6e6e6e"/><rect x="8.5" y="69.50" width="3.5" height="1" fill="#a0a0a0"/><rect x="10.5" y="73.28" width="1.5" height="1" fill="#6e6e6e"/><rect x="10" y="77.06" width="2" height="1" fill="#9a9a9a"/><rect x="10.5" y="80.84" width="1.5" height="1" fill="#6e6e6e"/><rect x="10" y="84.62" width="2" height="1" fill="#9a9a9a"/><rect x="10" y="92.18" width="2" height="1" fill="#9a9a9a"/><rect x="10.5" y="95.96" width="1.5" height="1" fill="#6e6e6e"/><rect x="10" y="99.74" width="2" height="1" fill="#9a9a9a"/><rect x="10.5" y="103.52" width="1.5" height="1" fill="#6e6e6e"/><rect x="8.5" y="107.30" width="3.5" height="1" fill="#a0a0a0"/><rect x="10.5" y="111.08" width="1.5" height="1" fill="#6e6e6e"/><rect x="10" y="114.86" width="2" height="1" fill="#9a9a9a"/><rect x="10.5" y="118.64" width="1.5" height="1" fill="#6e6e6e"/><rect x="10" y="122.42" width="2" height="1" fill="#9a9a9a"/><rect x="10" y="129.98" width="2" height="1" fill="#9a9a9a"/><rect x="10.5" y="133.76" width="1.5" height="1" fill="#6e6e6e"/><rect x="10" y="137.54" width="2" height="1" fill="#9a9a9a"/><rect x="10.5" y="141.32" width="1.5" height="1" fill="#6e6e6e"/><rect x="8.5" y="145.10" width="3.5" height="1" fill="#a0a0a0"/><rect x="10.5" y="148.88" width="1.5" height="1" fill="#6e6e6e"/><rect x="10" y="152.66" width="2" height="1" fill="#9a9a9a"/><rect x="10.5" y="156.44" width="1.5" height="1" fill="#6e6e6e"/><rect x="10" y="160.22" width="2" height="1" fill="#9a9a9a"/><rect x="10" y="167.78" width="2" height="1" fill="#9a9a9a"/><rect x="10.5" y="171.56" width="1.5" height="1" fill="#6e6e6e"/><rect x="10" y="175.34" width="2" height="1" fill="#9a9a9a"/><rect x="10.5" y="179.12" width="1.5" height="1" fill="#6e6e6e"/><rect x="8.5" y="182.90" width="3.5" height="1" fill="#a0a0a0"/><rect x="10.5" y="186.68" width="1.5" height="1" fill="#6e6e6e"/><rect x="10" y="190.46" width="2" height="1" fill="#9a9a9a"/><rect x="10.5" y="194.24" width="1.5" height="1" fill="#6e6e6e"/><rect x="10" y="198.02" width="2" height="1" fill="#9a9a9a"/><rect x="10" y="205.58" width="2" height="1" fill="#9a9a9a"/><rect x="10.5" y="209.36" width="1.5" height="1" fill="#6e6e6e"/><rect x="10" y="213.14" width="2" height="1" fill="#9a9a9a"/><rect x="10.5" y="216.92" width="1.5" height="1" fill="#6e6e6e"/><rect x="8.5" y="220.70" width="3.5" height="1" fill="#a0a0a0"/><rect x="10.5" y="224.48" width="1.5" height="1" fill="#6e6e6e"/><rect x="10" y="228.26" width="2" height="1" fill="#9a9a9a"/><rect x="10.5" y="232.04" width="1.5" height="1" fill="#6e6e6e"/><rect x="10" y="235.82" width="2" height="1" fill="#9a9a9a"/><rect x="10" y="243.38" width="2" height="1" fill="#9a9a9a"/><rect x="10.5" y="247.16" width="1.5" height="1" fill="#6e6e6e"/><rect x="10" y="250.94" width="2" height="1" fill="#9a9a9a"/><rect x="10.5" y="254.72" width="1.5" height="1" fill="#6e6e6e"/><rect x="8.5" y="258.50" width="3.5" height="1" fill="#a0a0a0"/><rect x="10.5" y="262.28" width="1.5" height="1" fill="#6e6e6e"/><rect x="10" y="266.06" width="2" height="1" fill="#9a9a9a"/><rect x="10.5" y="269.84" width="1.5" height="1" fill="#6e6e6e"/><rect x="10" y="273.62" width="2" height="1" fill="#9a9a9a"/><rect x="10" y="281.18" width="2" height="1" fill="#9a9a9a"/><rect x="10.5" y="284.96" width="1.5" height="1" fill="#6e6e6e"/><rect x="10" y="288.74" width="2" height="1" fill="#9a9a9a"/><rect x="10.5" y="292.52" width="1.5" height="1" fill="#6e6e6e"/><rect x="8.5" y="296.30" width="3.5" height="1" fill="#a0a0a0"/><rect x="10.5" y="300.08" width="1.5" height="1" fill="#6e6e6e"/><rect x="10" y="303.86" width="2" height="1" fill="#9a9a9a"/><rect x="10.5" y="307.64" width="1.5" height="1" fill="#6e6e6e"/><rect x="10" y="311.42" width="2" height="1" fill="#9a9a9a"/><rect x="10" y="318.98" width="2" height="1" fill="#9a9a9a"/><rect x="10.5" y="322.76" width="1.5" height="1" fill="#6e6e6e"/><rect x="10" y="326.54" width="2" height="1" fill="#9a9a9a"/><rect x="10.5" y="330.32" width="1.5" height="1" fill="#6e6e6e"/><rect x="8.5" y="334.10" width="3.5" height="1" fill="#a0a0a0"/><rect x="10.5" y="337.88" width="1.5" height="1" fill="#6e6e6e"/><rect x="10" y="341.66" width="2" height="1" fill="#9a9a9a"/><rect x="10.5" y="345.44" width="1.5" height="1" fill="#6e6e6e"/><rect x="10" y="349.22" width="2" height="1" fill="#9a9a9a"/><rect x="10" y="356.78" width="2" height="1" fill="#9a9a9a"/><rect x="10.5" y="360.56" width="1.5" height="1" fill="#6e6e6e"/><rect x="10" y="364.34" width="2" height="1" fill="#9a9a9a"/><rect x="10.5" y="368.12" width="1.5" height="1" fill="#6e6e6e"/><rect x="8.5" y="371.90" width="3.5" height="1" fill="#a0a0a0"/><rect x="10.5" y="375.68" width="1.5" height="1" fill="#6e6e6e"/><rect x="10" y="379.46" width="2" height="1" fill="#9a9a9a"/><rect x="10.5" y="383.24" width="1.5" height="1" fill="#6e6e6e"/><rect x="10" y="387.02" width="2" height="1" fill="#9a9a9a"/><rect x="10" y="394.58" width="2" height="1" fill="#9a9a9a"/><rect x="10.5" y="398.36" width="1.5" height="1" fill="#6e6e6e"/><rect x="10" y="402.14" width="2" height="1" fill="#9a9a9a"/><rect x="10.5" y="405.92" width="1.5" height="1" fill="#6e6e6e"/><rect x="8.5" y="409.70" width="3.5" height="1" fill="#a0a0a0"/><rect x="10.5" y="413.48" width="1.5" height="1" fill="#6e6e6e"/><rect x="10" y="417.26" width="2" height="1" fill="#9a9a9a"/><rect x="10.5" y="421.04" width="1.5" height="1" fill="#6e6e6e"/><rect x="10" y="424.82" width="2" height="1" fill="#9a9a9a"/><rect x="10" y="432.38" width="2" height="1" fill="#9a9a9a"/><rect x="10.5" y="436.16" width="1.5" height="1" fill="#6e6e6e"/><rect x="10" y="439.94" width="2" height="1" fill="#9a9a9a"/><rect x="10.5" y="443.72" width="1.5" height="1" fill="#6e6e6e"/><rect x="8.5" y="447.50" width="3.5" height="1" fill="#a0a0a0"/><rect x="10.5" y="451.28" width="1.5" height="1" fill="#6e6e6e"/><rect x="10" y="455.06" width="2" height="1" fill="#9a9a9a"/><rect x="10.5" y="458.84" width="1.5" height="1" fill="#6e6e6e"/><rect x="10" y="462.62" width="2" height="1" fill="#9a9a9a"/><rect x="10" y="470.18" width="2" height="1" fill="#9a9a9a"/><rect x="10.5" y="473.96" width="1.5" height="1" fill="#6e6e6e"/><rect x="10" y="477.74" width="2" height="1" fill="#9a9a9a"/><rect x="10.5" y="481.52" width="1.5" height="1" fill="#6e6e6e"/><rect x="8.5" y="485.30" width="3.5" height="1" fill="#a0a0a0"/><rect x="10.5" y="489.08" width="1.5" height="1" fill="#6e6e6e"/><rect x="10" y="492.86" width="2" height="1" fill="#9a9a9a"/><rect x="10.5" y="496.64" width="1.5" height="1" fill="#6e6e6e"/><rect x="10" y="500.42" width="2" height="1" fill="#9a9a9a"/><rect x="10" y="507.98" width="2" height="1" fill="#9a9a9a"/><rect x="10.5" y="511.76" width="1.5" height="1" fill="#6e6e6e"/><rect x="10" y="515.54" width="2" height="1" fill="#9a9a9a"/><rect x="10.5" y="519.32" width="1.5" height="1" fill="#6e6e6e"/><rect x="8.5" y="523.10" width="3.5" height="1" fill="#a0a0a0"/><rect x="10.5" y="526.88" width="1.5" height="1" fill="#6e6e6e"/><rect x="10" y="530.66" width="2" height="1" fill="#9a9a9a"/><rect x="10.5" y="534.44" width="1.5" height="1" fill="#6e6e6e"/><rect x="10" y="538.22" width="2" height="1" fill="#9a9a9a"/><rect x="10" y="545.78" width="2" height="1" fill="#9a9a9a"/><rect x="10.5" y="549.56" width="1.5" height="1" fill="#6e6e6e"/><rect x="10" y="553.34" width="2" height="1" fill="#9a9a9a"/><rect x="10.5" y="557.12" width="1.5" height="1" fill="#6e6e6e"/><rect x="8.5" y="560.90" width="3.5" height="1" fill="#a0a0a0"/><rect x="10.5" y="564.68" width="1.5" height="1" fill="#6e6e6e"/><rect x="10" y="568.46" width="2" height="1" fill="#9a9a9a"/><rect x="10.5" y="572.24" width="1.5" height="1" fill="#6e6e6e"/><rect x="10" y="576.02" width="2" height="1" fill="#9a9a9a"/><rect x="10" y="583.58" width="2" height="1" fill="#9a9a9a"/><rect x="10.5" y="587.36" width="1.5" height="1" fill="#6e6e6e"/><rect x="10" y="591.14" width="2" height="1" fill="#9a9a9a"/><rect x="10.5" y="594.92" width="1.5" height="1" fill="#6e6e6e"/><rect x="8.5" y="598.70" width="3.5" height="1" fill="#a0a0a0"/><rect x="10.5" y="602.48" width="1.5" height="1" fill="#6e6e6e"/><rect x="10" y="606.26" width="2" height="1" fill="#9a9a9a"/><rect x="10.5" y="610.04" width="1.5" height="1" fill="#6e6e6e"/><rect x="10" y="613.82" width="2" height="1" fill="#9a9a9a"/><rect x="10" y="621.38" width="2" height="1" fill="#9a9a9a"/><rect x="10.5" y="625.16" width="1.5" height="1" fill="#6e6e6e"/><rect x="10" y="628.94" width="2" height="1" fill="#9a9a9a"/><rect x="10.5" y="632.72" width="1.5" height="1" fill="#6e6e6e"/><rect x="8.5" y="636.50" width="3.5" height="1" fill="#a0a0a0"/><rect x="10.5" y="640.28" width="1.5" height="1" fill="#6e6e6e"/><rect x="10" y="644.06" width="2" height="1" fill="#9a9a9a"/><rect x="10.5" y="647.84" width="1.5" height="1" fill="#6e6e6e"/><rect x="10" y="651.62" width="2" height="1" fill="#9a9a9a"/><rect x="10" y="659.18" width="2" height="1" fill="#9a9a9a"/><rect x="10.5" y="662.96" width="1.5" height="1" fill="#6e6e6e"/><rect x="10" y="666.74" width="2" height="1" fill="#9a9a9a"/><rect x="10.5" y="670.52" width="1.5" height="1" fill="#6e6e6e"/><rect x="8.5" y="674.30" width="3.5" height="1" fill="#a0a0a0"/><rect x="10.5" y="678.08" width="1.5" height="1" fill="#6e6e6e"/><rect x="10" y="681.86" width="2" height="1" fill="#9a9a9a"/><rect x="10.5" y="685.64" width="1.5" height="1" fill="#6e6e6e"/><rect x="10" y="689.42" width="2" height="1" fill="#9a9a9a"/><rect x="10" y="696.98" width="2" height="1" fill="#9a9a9a"/><rect x="10.5" y="700.76" width="1.5" height="1" fill="#6e6e6e"/><rect x="10" y="704.54" width="2" height="1" fill="#9a9a9a"/><rect x="10.5" y="708.32" width="1.5" height="1" fill="#6e6e6e"/><rect x="8.5" y="712.10" width="3.5" height="1" fill="#a0a0a0"/><rect x="10.5" y="715.88" width="1.5" height="1" fill="#6e6e6e"/><rect x="10" y="719.66" width="2" height="1" fill="#9a9a9a"/><rect x="10.5" y="723.44" width="1.5" height="1" fill="#6e6e6e"/><rect x="10" y="727.22" width="2" height="1" fill="#9a9a9a"/><rect x="10" y="734.78" width="2" height="1" fill="#9a9a9a"/><rect x="1" y="12.80" width="11" height="1" fill="#6e6e6e"/><text transform="translate(0.5,20.20) scale(0.85,1)" class="rv">4</text><text transform="translate(0.5,27.50) scale(0.85,1)" class="rv">0</text><text transform="translate(0.5,34.80) scale(0.85,1)" class="rv">0</text><rect x="1" y="50.60" width="11" height="1" fill="#6e6e6e"/><text transform="translate(0.5,58.00) scale(0.85,1)" class="rv">3</text><text transform="translate(0.5,65.30) scale(0.85,1)" class="rv">0</text><text transform="translate(0.5,72.60) scale(0.85,1)" class="rv">0</text><rect x="1" y="88.40" width="11" height="1" fill="#6e6e6e"/><text transform="translate(0.5,95.80) scale(0.85,1)" class="rv">2</text><text transform="translate(0.5,103.10) scale(0.85,1)" class="rv">0</text><text transform="translate(0.5,110.40) scale(0.85,1)" class="rv">0</text><rect x="1" y="126.20" width="11" height="1" fill="#6e6e6e"/><text transform="translate(0.5,133.60) scale(0.85,1)" class="rv">1</text><text transform="translate(0.5,140.90) scale(0.85,1)" class="rv">0</text><text transform="translate(0.5,148.20) scale(0.85,1)" class="rv">0</text><rect x="1" y="164.00" width="11" height="1" fill="#6e6e6e"/><text transform="translate(0.5,171.40) scale(0.85,1)" class="rv">0</text><rect x="1" y="201.80" width="11" height="1" fill="#6e6e6e"/><text transform="translate(0.5,209.20) scale(0.85,1)" class="rv">1</text><text transform="translate(0.5,216.50) scale(0.85,1)" class="rv">0</text><text transform="translate(0.5,223.80) scale(0.85,1)" class="rv">0</text><rect x="1" y="239.60" width="11" height="1" fill="#6e6e6e"/><text transform="translate(0.5,247.00) scale(0.85,1)" class="rv">2</text><text transform="translate(0.5,254.30) scale(0.85,1)" class="rv">0</text><text transform="translate(0.5,261.60) scale(0.85,1)" class="rv">0</text><rect x="1" y="277.40" width="11" height="1" fill="#6e6e6e"/><text transform="translate(0.5,284.80) scale(0.85,1)" class="rv">3</text><text transform="translate(0.5,292.10) scale(0.85,1)" class="rv">0</text><text transform="translate(0.5,299.40) scale(0.85,1)" class="rv">0</text><rect x="1" y="315.20" width="11" height="1" fill="#6e6e6e"/><text transform="translate(0.5,322.60) scale(0.85,1)" class="rv">4</text><text transform="translate(0.5,329.90) scale(0.85,1)" class="rv">0</text><text transform="translate(0.5,337.20) scale(0.85,1)" class="rv">0</text><rect x="1" y="353.00" width="11" height="1" fill="#6e6e6e"/><text transform="translate(0.5,360.40) scale(0.85,1)" class="rv">5</text><text transform="translate(0.5,367.70) scale(0.85,1)" class="rv">0</text><text transform="translate(0.5,375.00) scale(0.85,1)" class="rv">0</text><rect x="1" y="390.80" width="11" height="1" fill="#6e6e6e"/><text transform="translate(0.5,398.20) scale(0.85,1)" class="rv">6</text><text transform="translate(0.5,405.50) scale(0.85,1)" class="rv">0</text><text transform="translate(0.5,412.80) scale(0.85,1)" class="rv">0</text><rect x="1" y="428.60" width="11" height="1" fill="#6e6e6e"/><text transform="translate(0.5,436.00) scale(0.85,1)" class="rv">7</text><text transform="translate(0.5,443.30) scale(0.85,1)" class="rv">0</text><text transform="translate(0.5,450.60) scale(0.85,1)" class="rv">0</text><rect x="1" y="466.40" width="11" height="1" fill="#6e6e6e"/><text transform="translate(0.5,473.80) scale(0.85,1)" class="rv">8</text><text transform="translate(0.5,481.10) scale(0.85,1)" class="rv">0</text><text transform="translate(0.5,488.40) scale(0.85,1)" class="rv">0</text><rect x="1" y="504.20" width="11" height="1" fill="#6e6e6e"/><text transform="translate(0.5,511.60) scale(0.85,1)" class="rv">9</text><text transform="translate(0.5,518.90) scale(0.85,1)" class="rv">0</text><text transform="translate(0.5,526.20) scale(0.85,1)" class="rv">0</text><rect x="1" y="542.00" width="11" height="1" fill="#6e6e6e"/><text transform="translate(0.5,549.40) scale(0.85,1)" class="rv">1</text><text transform="translate(0.5,556.70) scale(0.85,1)" class="rv">0</text><text transform="translate(0.5,564.00) scale(0.85,1)" class="rv">0</text><text transform="translate(0.5,571.30) scale(0.85,1)" class="rv">0</text><rect x="1" y="579.80" width="11" height="1" fill="#6e6e6e"/><text transform="translate(0.5,587.20) scale(0.85,1)" class="rv">1</text><text transform="translate(0.5,594.50) scale(0.85,1)" class="rv">1</text><text transform="translate(0.5,601.80) scale(0.85,1)" class="rv">0</text><text transform="translate(0.5,609.10) scale(0.85,1)" class="rv">0</text><rect x="1" y="617.60" width="11" height="1" fill="#6e6e6e"/><text transform="translate(0.5,625.00) scale(0.85,1)" class="rv">1</text><text transform="translate(0.5,632.30) scale(0.85,1)" class="rv">2</text><text transform="translate(0.5,639.60) scale(0.85,1)" class="rv">0</text><text transform="translate(0.5,646.90) scale(0.85,1)" class="rv">0</text><rect x="1" y="655.40" width="11" height="1" fill="#6e6e6e"/><text transform="translate(0.5,662.80) scale(0.85,1)" class="rv">1</text><text transform="translate(0.5,670.10) scale(0.85,1)" class="rv">3</text><text transform="translate(0.5,677.40) scale(0.85,1)" class="rv">0</text><text transform="translate(0.5,684.70) scale(0.85,1)" class="rv">0</text><rect x="1" y="693.20" width="11" height="1" fill="#6e6e6e"/><text transform="translate(0.5,700.60) scale(0.85,1)" class="rv">1</text><text transform="translate(0.5,707.90) scale(0.85,1)" class="rv">4</text><text transform="translate(0.5,715.20) scale(0.85,1)" class="rv">0</text><text transform="translate(0.5,722.50) scale(0.85,1)" class="rv">0</text><rect x="1" y="731.00" width="11" height="1" fill="#6e6e6e"/><text transform="translate(0.5,738.40) scale(0.85,1)" class="rv">1</text><text transform="translate(0.5,745.70) scale(0.85,1)" class="rv">5</text><text transform="translate(0.5,753.00) scale(0.85,1)" class="rv">0</text><text transform="translate(0.5,760.30) scale(0.85,1)" class="rv">0</text></svg>
<div class="a" style="left:64px;top:73px;width:12px;height:13px;background:#4a4a4a"></div><svg class="a" style="left:64px;top:73px" width="12" height="13"><path d="M0 4.5 H11 M0 8.5 H11 M3.5 0 V12 M7.5 0 V12" stroke="#555" stroke-width="1" stroke-dasharray="1 1"/></svg>
<div class="a" style="left:64px;top:73px;width:829px;height:1px;background:#3c3c3c"></div>
<div class="a" style="left:76px;top:86px;width:805px;height:738px;background:#282828"></div>
<div class="a" style="left:115px;top:250px;width:728px;height:411px;background:#151515"></div>
<svg id="sky" class="a" style="left:116px;top:250px" width="726" height="409" viewBox="0 0 726 409">
<defs>
<linearGradient id="sg" x1="0" y1="0" x2="0" y2="1">
<stop offset="0" stop-color="#6d91a7"/>
<stop offset="0.2" stop-color="#7e9fb4"/>
<stop offset="0.45" stop-color="#97b2c2"/>
<stop offset="0.62" stop-color="#a9c0cd"/>
<stop offset="0.7" stop-color="#b8cad3"/>
<stop offset="0.77" stop-color="#c8d3d8"/>
<stop offset="0.84" stop-color="#d0d5d8"/>
<stop offset="0.91" stop-color="#d9d8d6"/>
<stop offset="1" stop-color="#ded7d1"/>
</linearGradient>
<linearGradient id="sh" x1="0" y1="0" x2="1" y2="0.3">
<stop offset="0" stop-color="#fff" stop-opacity="0.04"/>
<stop offset="0.45" stop-color="#fff" stop-opacity="0"/>
<stop offset="1" stop-color="#fff" stop-opacity="0.12"/>
</linearGradient>
<filter id="b2" x="-50%" y="-50%" width="200%" height="200%"><feGaussianBlur stdDeviation="2"/></filter>
<filter id="b3" x="-50%" y="-50%" width="200%" height="200%"><feGaussianBlur stdDeviation="3"/></filter>
<filter id="b4" x="-50%" y="-50%" width="200%" height="200%"><feGaussianBlur stdDeviation="4"/></filter>
<filter id="b6" x="-50%" y="-50%" width="200%" height="200%"><feGaussianBlur stdDeviation="6"/></filter>
<filter id="b10" x="-50%" y="-50%" width="200%" height="200%"><feGaussianBlur stdDeviation="10"/></filter>
<filter id="b20" x="-50%" y="-50%" width="200%" height="200%"><feGaussianBlur stdDeviation="20"/></filter>
</defs>
<rect width="726" height="409" fill="url(#sg)"/>
<rect width="726" height="409" fill="url(#sh)"/>
<rect width="726" height="1" fill="#000" opacity="0.25"/><rect y="1" width="726" height="1" fill="#a8c4d8" opacity="0.5"/>
<rect x="0" y="0" width="1" height="409" fill="#fff" opacity="0.55"/>
<rect x="0" y="408" width="726" height="1" fill="#fff" opacity="0.6"/>
<g fill="#f0e8e2">
<ellipse cx="300" cy="345" rx="320" ry="18" opacity="0.18" filter="url(#b10)"/>
<ellipse cx="620" cy="330" rx="120" ry="10" opacity="0.25" filter="url(#b10)"/>
</g>
<g fill="#b8c4c6">
<ellipse cx="200" cy="390" rx="220" ry="8" opacity="0.3" filter="url(#b10)"/>
<ellipse cx="560" cy="385" rx="150" ry="5" opacity="0.25" filter="url(#b10)"/>
</g>
<g fill="#e8eef2">
<ellipse cx="24" cy="27" rx="30" ry="10" transform="rotate(12 24 27)" opacity="0.25" filter="url(#b6)"/><ellipse cx="30" cy="18" rx="22" ry="5" transform="rotate(25 30 18)" opacity="0.2" filter="url(#b4)"/>
<ellipse cx="12" cy="34" rx="18" ry="7" opacity="0.3" filter="url(#b4)"/>
<ellipse cx="18" cy="55" rx="28" ry="5" transform="rotate(5 18 55)" opacity="0.2" filter="url(#b4)"/>
<ellipse cx="110" cy="95" rx="120" ry="12" transform="rotate(20 110 95)" opacity="0.22" filter="url(#b10)"/>
<ellipse cx="250" cy="125" rx="280" ry="34" transform="rotate(13 250 125)" opacity="0.2" filter="url(#b20)"/>
<ellipse cx="420" cy="150" rx="200" ry="30" transform="rotate(6 420 150)" opacity="0.12" filter="url(#b20)"/>
<ellipse cx="330" cy="95" rx="130" ry="8" transform="rotate(-6 330 95)" opacity="0.12" filter="url(#b10)"/>
<path d="M36 163 Q120 172 217 189" stroke="#e8eef2" stroke-width="5" fill="none" opacity="0.3" filter="url(#b3)"/>
<ellipse cx="60" cy="150" rx="70" ry="6" transform="rotate(4 60 150)" opacity="0.14" filter="url(#b4)"/><ellipse cx="290" cy="150" rx="60" ry="6" opacity="0.14" filter="url(#b4)"/>
<path d="M353 185 Q420 176 490 188 T694 209" stroke="#e8eef2" stroke-width="9" fill="none" opacity="0.24" filter="url(#b3)"/><path d="M360 183 Q420 176 480 186" stroke="#eef2f4" stroke-width="6" fill="none" opacity="0.16" filter="url(#b2)"/><path d="M500 150 Q600 160 726 175" stroke="#e8eef2" stroke-width="10" fill="none" opacity="0.12" filter="url(#b6)"/>
<ellipse cx="660" cy="175" rx="80" ry="6" transform="rotate(2 660 175)" opacity="0.13" filter="url(#b4)"/>
<path d="M0 240 Q90 250 200 262" stroke="#e8eef2" stroke-width="8" fill="none" opacity="0.2" filter="url(#b4)"/><path d="M0 280 Q150 290 320 300" stroke="#e8eef2" stroke-width="10" fill="none" opacity="0.1" filter="url(#b6)"/>
<ellipse cx="560" cy="240" rx="160" ry="12" transform="rotate(2 560 240)" opacity="0.1" filter="url(#b10)"/>
<ellipse cx="280" cy="330" rx="260" ry="25" opacity="0.08" filter="url(#b20)"/>
<ellipse cx="620" cy="375" rx="60" ry="8" opacity="0.18" filter="url(#b10)"/>
</g>
<g fill="#bdbcc0">
<ellipse cx="600" cy="305" rx="150" ry="22" opacity="0.22" filter="url(#b20)"/>
</g>
</svg>
<svg class="a" style="left:530px;top:318px" width="44" height="44"><rect x="0.5" y="0.5" width="42" height="41" fill="none" stroke="#fff"/><rect x="0.5" y="0.5" width="42" height="41" fill="none" stroke="#000" stroke-dasharray="2.5 2.5"/></svg>

<!-- status bar -->
<div class="a" style="left:64px;top:824px;width:817px;height:11px;background:#515151"></div>
<div class="a" style="left:64px;top:824px;width:34px;height:11px;background:#434343"></div>
<div class="a" style="left:98px;top:824px;width:132px;height:11px;background:#494949"></div>
<div class="fit t" style="--w:31px;left:66px;top:825px;font-size:10px;color:#f0f0f0">52.71%</div>
<div class="fit t" style="--w:69px;left:124px;top:825px;font-size:9.5px;color:#c8c8c8;letter-spacing:-0.2px">문서:5.93M/7.91M</div>
<svg class="a" style="left:221px;top:826px" width="5" height="8"><path d="M1 1 L4 4 L1 7" stroke="#c8c8c8" fill="none"/></svg>
<div class="a" style="left:881px;top:73px;width:12px;height:751px;background:#4b4b4b"></div>
<div class="a" style="left:881px;top:824px;width:12px;height:11px;background:#525252"></div>
<div class="a" style="left:0;top:835px;width:1200px;height:1px;background:#3a3a3a"></div>
<div class="a" style="left:0;top:836px;width:1200px;height:1px;background:#474747"></div><div class="a" style="left:0;top:837px;width:1200px;height:2px;background:#505050"></div>

<!-- RIGHT COLLAPSED COLUMN -->
<div class="a" style="left:892px;top:53px;width:2px;height:782px;background:#3a3a3a"></div>
<div class="a" style="left:894px;top:53px;width:303px;height:9px;background:#404040"></div>
<svg class="a" style="left:910px;top:55px" width="8" height="6"><path d="M3 1 L1 3 L3 5z M6.5 1 L4.5 3 L6.5 5z" fill="#d0d0d0"/></svg>
<svg class="a" style="left:1186px;top:55px" width="8" height="6"><path d="M1 1 L3 3 L1 5z M4.5 1 L6.5 3 L4.5 5z" fill="#d0d0d0"/></svg>
<div class="a" style="left:894px;top:62px;width:27px;height:773px;background:#4e4e4e"></div>
<div class="a" style="left:894px;top:62px;width:27px;height:28px;background:#535353"></div>
<div class="a" style="left:894px;top:90px;width:27px;height:1px;background:#3e3e3e"></div>
<div class="a" style="left:894px;top:91px;width:27px;height:29px;background:#535353"></div>
<div class="a" style="left:894px;top:120px;width:27px;height:1px;background:#3e3e3e"></div>
<svg class="a" style="left:894px;top:62px" width="27" height="60">
<path d="M6 3.5 H21" stroke="#474747" stroke-width="1.5" stroke-dasharray="1.5 1.5"/>
<path d="M6 32.5 H21" stroke="#474747" stroke-width="1.5" stroke-dasharray="1.5 1.5"/>
<text x="8" y="21" style="font-family:'Liberation Serif',serif;font-size:14px;font-style:italic;font-weight:bold;fill:#e8e8e8">A</text>
<path d="M10 42 L20 46.5 L10 51.5z" fill="#e0e0e0"/>
</svg>
<div class="a" style="left:921px;top:62px;width:2px;height:773px;background:#3a3a3a"></div>

<!-- RIGHT PANELS -->
<div class="a" style="left:923px;top:62px;width:274px;height:773px;background:#535353"></div>
<div class="a" style="left:1197px;top:53px;width:3px;height:786px;background:#474747"></div>
<div class="a" style="left:1196px;top:53px;width:1px;height:782px;background:#3a3a3a"></div>

<!-- info panel -->
<div class="a" style="left:923px;top:62px;width:273px;height:20px;background:#424242"></div>
<div class="a tabs" style="left:923px;top:62px">
<div class="tab" style="width:32px"><span class="fitc" style="--w:16px">색상</span></div><div class="tab" style="width:52px"><span class="fitc" style="--w:36px">색상 견본</span></div><div class="tab on" style="width:30px"><span class="fitc" style="--w:17px">정보</span></div><div class="tab" style="width:50px"><span class="fitc" style="--w:36px">작업 내역</span></div>
</div>
<div class="a" style="left:1186px;top:69px;width:7px;height:5px;border-top:2px solid #c4c4c4;border-bottom:2px solid #c4c4c4"></div>
<div class="a" style="left:1059px;top:82px;width:1px;height:98px;background:#474747"></div>
<div class="a" style="left:923px;top:147px;width:273px;height:1px;background:#474747"></div>
<div class="a" style="left:923px;top:179px;width:273px;height:1px;background:#474747"></div>
<div class="a" style="left:923px;top:201px;width:273px;height:1px;background:#474747"></div>
<svg class="a" style="left:926px;top:101px" width="14" height="14"><path d="M2.5 11.5 L8 6" stroke="#e0e0e0" stroke-width="3.4" stroke-linecap="round"/><path d="M2.8 11.2 L7.6 6.4" stroke="#535353" stroke-width="1.3" stroke-linecap="round"/><path d="M6.5 4.5 L10 8 L11 7 L7.5 3.5z" fill="#e0e0e0"/><path d="M8.5 4 L10.5 2 Q11.5 1.5 12 2.5 Q12.5 3.5 12 4 L10 6z" fill="#e0e0e0"/><path d="M9.5 10.5 h3 l-1.5 1.5z" fill="#e0e0e0"/></svg>
<svg class="a" style="left:1063px;top:101px" width="14" height="14"><path d="M2.5 11.5 L8 6" stroke="#e0e0e0" stroke-width="3.4" stroke-linecap="round"/><path d="M2.8 11.2 L7.6 6.4" stroke="#535353" stroke-width="1.3" stroke-linecap="round"/><path d="M6.5 4.5 L10 8 L11 7 L7.5 3.5z" fill="#e0e0e0"/><path d="M8.5 4 L10.5 2 Q11.5 1.5 12 2.5 Q12.5 3.5 12 4 L10 6z" fill="#e0e0e0"/><path d="M9.5 10.5 h3 l-1.5 1.5z" fill="#e0e0e0"/></svg>
<div class="info">
<span class="t" style="left:949px;top:92px">R :</span>
<span class="t" style="left:949px;top:102px">G :</span>
<span class="t" style="left:950px;top:112px">B :</span>
<span class="t" style="left:1085px;top:92px">R :</span>
<span class="t" style="left:1085px;top:102px">G :</span>
<span class="t" style="left:1086px;top:112px">B :</span>
<span class="fit t" style="--w:23.3px;left:937px;top:133px">8비트</span>
<span class="fit t" style="--w:23.3px;left:1074px;top:133px">8비트</span>
<span class="t" style="left:950px;top:154px">X :</span>
<span class="t" style="left:950px;top:165px">Y :</span>
<span class="t" style="left:1083px;top:154px">W :</span>
<span class="t" style="left:1085px;top:165px">H :</span>
<span class="t" style="left:1154px;top:154px">113</span>
<span class="t" style="left:1154px;top:165px">112</span>
<span class="fit t" style="--w:74px;left:932px;top:187px">문서:5.93M/7.91M</span>
</div>
<svg class="a" style="left:926px;top:159px" width="14" height="12"><path d="M2 5.5 H11 M6.5 1 V10.5" stroke="#e0e0e0" stroke-width="1.1"/><path d="M10 9.5 h3 l-1.5 1.5z" fill="#e0e0e0"/></svg>
<svg class="a" style="left:1064px;top:160px" width="12" height="11"><path d="M1.8 9 V1.8 H8.5" fill="none" stroke="#e0e0e0" stroke-width="1.2"/><path d="M8 0 L10.5 1.8 L8 3.6z" fill="#e0e0e0"/><path d="M0 8.5 L1.8 10.8 L3.6 8.5z" fill="#e0e0e0"/><path d="M9.3 4 V9.3 H3" fill="none" stroke="#b0b0b0" stroke-width="1" stroke-dasharray="1 1"/></svg>
<span class="fit t" style="--w:249.5px;left:932px;top:209.5px;font-size:10px;color:#d6d6d6">원하는 영역을 사각형으로 선택하거나 선택 영역의 윤곽선</span>
<span class="fit t" style="--w:249px;left:932px;top:220px;font-size:10px;color:#d6d6d6">을 이동할 수 있습니다. 추가 옵션을 보려면 Shift, Alt 및 Ctrl</span>
<span class="fit t" style="--w:82.5px;left:932px;top:230.5px;font-size:10px;color:#d6d6d6">키를 사용하십시오.</span>
<div class="a" style="left:923px;top:276px;width:273px;height:2px;background:#3a3a3a"></div>

<!-- properties panel -->
<div class="a" style="left:923px;top:278px;width:273px;height:20px;background:#424242"></div>
<div class="a tabs" style="left:923px;top:278px">
<div class="tab" style="width:30px"><span class="fitc" style="--w:17px">조정</span></div><div class="tab" style="width:32px"><span class="fitc" style="--w:17px">단락</span></div><div class="tab" style="width:32px"><span class="fitc" style="--w:17px">문자</span></div><div class="tab on" style="width:30px"><span class="fitc" style="--w:17px">속성</span></div>
</div>
<div class="a" style="left:1186px;top:285px;width:7px;height:5px;border-top:2px solid #c4c4c4;border-bottom:2px solid #c4c4c4"></div>
<div class="a" style="left:931px;top:303px;width:17px;height:17px;background:#3a3a3a"></div>
<svg class="a" style="left:931px;top:303px" width="17" height="17"><rect x="3.5" y="4.5" width="10" height="8" fill="none" stroke="#d8d8d8"/><path d="M4 12 L7 8 L9 10 L11 7 L13 12z" fill="#d8d8d8"/></svg>
<span class="fit t" style="--w:73px;left:953px;top:307px;font-size:10px;color:#d8d8d8">픽셀 레이어 속성</span>
<div class="a" style="left:923px;top:325px;width:273px;height:1px;background:#474747"></div>
<div class="a" style="left:1185px;top:326px;width:11px;height:195px;background:#4b4b4b"></div>
<div class="props">
<span class="t" style="left:931px;top:337px">W:</span>
<span class="t" style="left:1030px;top:337px">H:</span>
<span class="t" style="left:934px;top:363px">X:</span>
<span class="t" style="left:1030px;top:363px">Y:</span>
</div>
<div class="a fld" style="left:947px;top:334px;width:48px;height:16px"></div>
<div class="a fld" style="left:1044px;top:334px;width:48px;height:16px"></div>
<div class="a fld" style="left:947px;top:359px;width:48px;height:16px"></div>
<div class="a fld" style="left:1043px;top:359px;width:48px;height:16px"></div>
<div class="a" style="left:1002px;top:332px;width:20px;height:20px;background:#3c3c3c"></div>
<svg class="a" style="left:1002px;top:332px" width="20" height="20"><rect x="4.5" y="7.5" width="6" height="5" rx="2.5" fill="none" stroke="#c8c8c8" stroke-width="1.4"/><rect x="9.5" y="7.5" width="6" height="5" rx="2.5" fill="none" stroke="#c8c8c8" stroke-width="1.4"/></svg>
<div class="fldt">
<span class="fit t" style="--w:37px;left:951px;top:338px">1920 픽셀</span>
<span class="fit t" style="--w:37px;left:1048px;top:338px">1080 픽셀</span>
<span class="fit t" style="--w:22px;left:951px;top:363px">0 픽셀</span>
<span class="fit t" style="--w:22px;left:1047px;top:363px">0 픽셀</span>
</div>
<div class="a" style="left:923px;top:543px;width:273px;height:2px;background:#3a3a3a"></div>

<!-- layers panel -->
<div class="a" style="left:923px;top:545px;width:273px;height:20px;background:#424242"></div>
<div class="a tabs" style="left:923px;top:545px">
<div class="tab on" style="width:39px"><span class="fitc" style="--w:25.5px">레이어</span></div><div class="tab" style="width:31px"><span class="fitc" style="--w:17px">채널</span></div><div class="tab" style="width:30px"><span class="fitc" style="--w:16.5px">패스</span></div>
</div>
<div class="a" style="left:1186px;top:552px;width:7px;height:5px;border-top:2px solid #c4c4c4;border-bottom:2px solid #c4c4c4"></div>
<div class="a fld" style="left:926px;top:571px;width:69px;height:16px"></div>
<svg class="a" style="left:929px;top:574px" width="10" height="10"><circle cx="4" cy="4" r="2.6" fill="none" stroke="#e0e0e0" stroke-width="1.4"/><path d="M6 6 L9 9" stroke="#e0e0e0" stroke-width="1.8"/></svg>
<span class="fit t fl" style="--w:22px;left:941px;top:574px">종류</span>
<svg class="a" style="left:984px;top:577px" width="8" height="5"><path d="M1 1 L4 4 L7 1" stroke="#c8c8c8" fill="none" stroke-width="1"/></svg>
<svg class="a" style="left:1010px;top:570px" width="115" height="18">
<rect x="3.5" y="3.5" width="11" height="10" fill="none" stroke="#d8d8d8" stroke-width="1.3"/><path d="M5 12 L8 8.5 L10 10 L12 8 L13.5 12z" fill="#d8d8d8"/>
<circle cx="27" cy="8.5" r="5" fill="none" stroke="#d8d8d8" stroke-width="1.3"/><path d="M23.5 12 L30.5 5 A5 5 0 0 1 23.5 12z" fill="#d8d8d8"/>
<path d="M39 4 H49 M44 4 V13 M41.5 13 H46.5 M39.5 4 v2.5 M48.5 4 v2.5" stroke="#d8d8d8" stroke-width="1.8" fill="none"/>
<rect x="57" y="4" width="9" height="9" fill="none" stroke="#d8d8d8" stroke-width="1.4"/><rect x="55.5" y="2.5" width="3" height="3" fill="#d8d8d8"/><rect x="64.5" y="2.5" width="3" height="3" fill="#d8d8d8"/><rect x="55.5" y="11.5" width="3" height="3" fill="#d8d8d8"/><rect x="64.5" y="11.5" width="3" height="3" fill="#d8d8d8"/>
<path d="M76 3.5 h5 l3 3 v8 h-8z" fill="none" stroke="#d8d8d8" stroke-width="1.2"/><rect x="74" y="9" width="6" height="6" fill="#d8d8d8"/>
<rect x="101" y="3" width="7" height="15" rx="3.5" fill="#3e3e3e"/><circle cx="104.5" cy="6" r="3.3" fill="#e8e8e8"/>
</svg>
<div class="a" style="left:923px;top:589px;width:273px;height:1px;background:#474747"></div>
<div class="a fld" style="left:926px;top:592px;width:97px;height:16px"></div>
<span class="fit t fl" style="--w:18px;left:932px;top:595px">표준</span>
<svg class="a" style="left:1013px;top:598px" width="8" height="5"><path d="M1 1 L4 4 L7 1" stroke="#c8c8c8" fill="none" stroke-width="1"/></svg>
<span class="fit t fl" style="--w:39.5px;left:1030px;top:595px">불투명도:</span>
<div class="a fld" style="left:1074px;top:592px;width:43px;height:16px"></div>
<div class="a" style="left:1106px;top:593px;width:1px;height:14px;background:#3a3a3a"></div>
<span class="fit t fl" style="--w:24px;left:1076px;top:595px">100%</span>
<svg class="a" style="left:1108px;top:598px" width="8" height="5"><path d="M1 1 L4 4 L7 1" stroke="#c8c8c8" fill="none" stroke-width="1"/></svg>
<div class="a" style="left:923px;top:611px;width:273px;height:1px;background:#474747"></div>
<span class="fit t fl" style="--w:32px;left:928px;top:616px;color:#d0d0d0">잠그기:</span>
<svg class="a" style="left:962px;top:613px" width="80" height="16">
<rect x="3.5" y="3.5" width="9" height="9" fill="#d8d8d8"/><rect x="5" y="5" width="2" height="2" fill="#535353"/><rect x="9" y="5" width="2" height="2" fill="#535353"/><rect x="7" y="7" width="2" height="2" fill="#535353"/><rect x="5" y="9" width="2" height="2" fill="#535353"/><rect x="9" y="9" width="2" height="2" fill="#535353"/>
<path d="M22.5 10 L28 3.5" stroke="#d8d8d8" stroke-width="2.2" stroke-linecap="round"/><path d="M18 14.5 q0.3 -4 3.2 -5 l2 1.8 q-0.8 3.4 -5.2 3.2z" fill="#d8d8d8"/>
<path d="M39 2 v12 M33 8 h12" stroke="#d8d8d8" stroke-width="1.6"/><path d="M39 1 l-2 2 h4z M39 15 l-2 -2 h4z M32 8 l2 -2 v4z M46 8 l-2 -2 v4z" fill="#d8d8d8"/>
<path d="M49 5.5 h9.5 v9 M51.5 3 v9 h9" fill="none" stroke="#d8d8d8" stroke-width="1.4"/><path d="M49 13 l3 -2" stroke="#d8d8d8" stroke-width="1"/>
<rect x="66.5" y="7.5" width="8" height="6" fill="#d8d8d8"/><path d="M68.5 7.5 v-2 a2 2 0 0 1 4 0 v2" fill="none" stroke="#d8d8d8" stroke-width="1.3"/>
</svg>
<span class="fit t fl" style="--w:12px;left:1058px;top:616px">칠:</span>
<div class="a fld" style="left:1074px;top:614px;width:43px;height:15px"></div>
<div class="a" style="left:1106px;top:615px;width:1px;height:13px;background:#3a3a3a"></div>
<span class="fit t fl" style="--w:24px;left:1076px;top:616px">100%</span>
<svg class="a" style="left:1108px;top:620px" width="8" height="5"><path d="M1 1 L4 4 L7 1" stroke="#c8c8c8" fill="none" stroke-width="1"/></svg>
<div class="a" style="left:923px;top:632px;width:273px;height:1px;background:#474747"></div>
<div class="a" style="left:923px;top:633px;width:273px;height:182px;background:#4e4e4e"></div>
<div class="a" style="left:1185px;top:634px;width:11px;height:181px;background:#484848"></div>
<div class="a" style="left:923px;top:634px;width:262px;height:19px;background:#686868"></div><div class="a" style="left:923px;top:634px;width:22px;height:19px;background:#585858"></div>
<svg class="a" style="left:928px;top:639px" width="13" height="9"><path d="M1 4.5 Q6 -0.5 11 4.5 Q6 9.5 1 4.5z" fill="#f2f2f2"/><circle cx="6" cy="4.5" r="2.2" fill="#3a3a3a"/><circle cx="5.4" cy="3.8" r="0.6" fill="#aaa"/></svg>
<div class="a" style="left:947px;top:637px;width:24px;height:14px;background:#333"></div><div class="a" style="left:948px;top:638px;width:22px;height:12px;background:linear-gradient(#7f9fb5,#a9c0cd 55%,#d6d8d8 85%,#e0dad5)"></div>
<svg class="a" style="left:945px;top:634px" width="28" height="19"><path d="M1 5 V1 H9 M19 1 H27 V5 M27 14 V18 H19 M9 18 H1 V14" fill="none" stroke="#f4f4f4" stroke-width="1.4"/></svg>
<span class="fit t" style="--w:37px;left:977px;top:639px;font-size:10px;color:#e8e8e8">레이어 0</span>
<div class="a" style="left:923px;top:815px;width:273px;height:20px;background:#535353;border-top:1px solid #474747"></div>
<svg class="a" style="left:1000px;top:815px" width="180" height="20">
<rect x="5.5" y="7" width="7" height="6" rx="3" fill="none" stroke="#8a8a8a" stroke-width="1.4"/><rect x="10.5" y="7" width="7" height="6" rx="3" fill="none" stroke="#8a8a8a" stroke-width="1.4"/>
<text x="33" y="15" style="font-family:'Liberation Serif',serif;font-style:italic;font-size:13px;fill:#e0e0e0">fx</text><rect x="45" y="16" width="1.5" height="1.5" fill="#e0e0e0"/>
<rect x="57" y="5" width="12" height="10" fill="#e0e0e0"/><circle cx="63" cy="10" r="2.8" fill="#535353"/>
<circle cx="90" cy="10" r="5" fill="none" stroke="#e0e0e0" stroke-width="1.3"/><path d="M86.5 13.5 L93.5 6.5 A5 5 0 0 1 86.5 13.5z" fill="#e0e0e0"/><rect x="96" y="16" width="1.5" height="1.5" fill="#e0e0e0"/>
<path d="M110 5 h5 l1 1.5 h6 v8.5 h-12z" fill="#e0e0e0"/>
<path d="M135 5.5 h10 v10 h-6 l-4 -4z" fill="none" stroke="#e0e0e0" stroke-width="1.4"/><path d="M135 11 h4 v4" fill="#e0e0e0"/>
<path d="M161 7 h10 M164 5.5 h4 M162 8 v8 h8 v-8" fill="none" stroke="#7a7a7a" stroke-width="1.3"/>
</svg>
<script>
(function(){
  var els = document.querySelectorAll('.fit,.fitc');
  for (var i=0;i<els.length;i++){
    var e = els[i];
    var w = parseFloat(getComputedStyle(e).getPropertyValue('--w'));
    var r = e.getBoundingClientRect().width;
    if (w>0 && r>0){
      e.style.transform = 'scaleX(' + (w/r).toFixed(4) + ')';
      e.style.transformOrigin = e.classList.contains('fitc') ? '50% 50%' : '0 0';
    }
  }
})();
</script>
</body></html>
